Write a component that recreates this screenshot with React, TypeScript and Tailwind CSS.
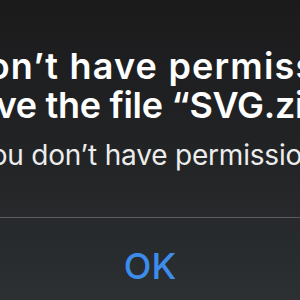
export default function App() {
    return (
        <div
            className="flex h-[300px] w-[300px] flex-col overflow-hidden bg-gradient-to-b from-[#1b1b1c] via-[#222325] to-[#2c3033] text-white"
            style={{ fontFamily: "Inter, 'Noto Sans', sans-serif" }}>
            <div className="pt-[47px]">
                <div className="-ml-[116px] whitespace-nowrap text-[36px] leading-[39px] font-semibold tracking-[1.2px]">
                    You don’t have permission
                </div>
                <div className="-ml-[86px] whitespace-nowrap text-[36px] leading-[39px] font-semibold tracking-[-0.3px]">
                    to save the file “SVG.zip”
                </div>
                <div className="mt-[13px] -ml-[26px] whitespace-nowrap text-[28px] leading-[34px] tracking-[-0.2px] text-[#ececec]">
                    You don’t have permission
                </div>
            </div>
            <div className="mt-[45px] h-px w-full bg-[#5a5c5e]" />
            <div className="flex flex-1 items-start justify-center pt-[26px]">
                <button className="text-[36px] leading-[44px] font-medium text-[#3d8cec]">OK</button>
            </div>
        </div>
    );
}
